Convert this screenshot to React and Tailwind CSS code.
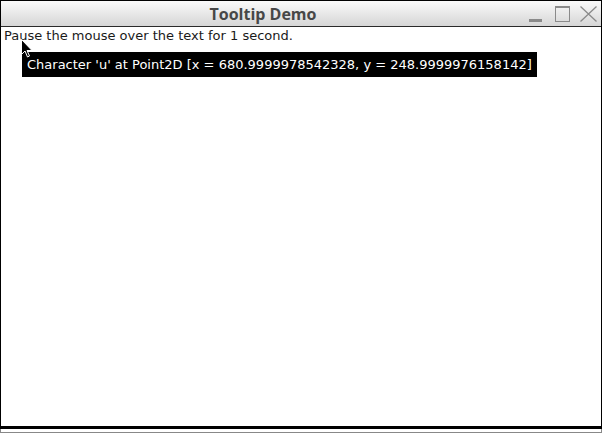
import React from "react";

const Cursor = () => (
  <svg width="12" height="19" viewBox="0 0 12 19" className="absolute left-[21px] top-[39px]">
    <path d="M0.5 0.5 L0.5 15.5 L4 12 L6.5 18 L8.5 17 L6 11.5 L11 11.5 Z" fill="#000" stroke="#fff" strokeWidth="1" />
  </svg>
);

const TitleBar = () => (
  <div className="relative flex h-[26px] items-center border-b border-[#2a2a2a] bg-gradient-to-b from-[#fafafa] to-[#d6d6d6]">
    <div className="flex-1 pr-[76px] text-center font-['Open_Sans',sans-serif] text-[16px] font-bold text-[#474747]">
      Tooltip Demo
    </div>
    <div className="absolute right-[4px] top-[5px] flex items-start">
      <svg width="13" height="16" viewBox="0 0 13 16" className="mr-[13px]">
        <rect x="0" y="13" width="13" height="3" fill="#8a8a8a" />
      </svg>
      <svg width="15" height="16" viewBox="0 0 15 16" className="mr-[10px]">
        <rect x="0.5" y="1" width="14" height="14.5" fill="none" stroke="#8a8a8a" strokeWidth="1" />
        <rect x="0" y="0" width="15" height="2" fill="#8a8a8a" />
      </svg>
      <svg width="17" height="16" viewBox="0 0 17 16">
        <path d="M0.5 0.5 L16.5 15.5 M16.5 0.5 L0.5 15.5" stroke="#8a8a8a" strokeWidth="1.3" />
      </svg>
    </div>
  </div>
);

export default function App() {
  return (
    <div className="relative flex h-[433px] w-[602px] flex-col bg-white font-['DejaVu_Sans',sans-serif]">
      <div className="flex flex-1 flex-col border border-black border-b-0">
        <TitleBar />
        <div className="relative flex-1">
          <p className="pl-[3px] pt-[1px] text-[13px] leading-[16px] text-[#1a1a1a]">
            Pause the mouse over the text for 1 second.
          </p>
          <div className="absolute left-[21px] top-[25px] bg-black px-[5px] py-[4px] text-[13px] leading-[17px] text-white">
            Character 'u' at Point2D [x = 680.9999978542328, y = 248.9999976158142]
          </div>
        </div>
      </div>
      <div className="h-[3px] bg-black" />
      <div className="h-[4px] border-x border-b border-[#888] bg-white" />
      <Cursor />
    </div>
  );
}
